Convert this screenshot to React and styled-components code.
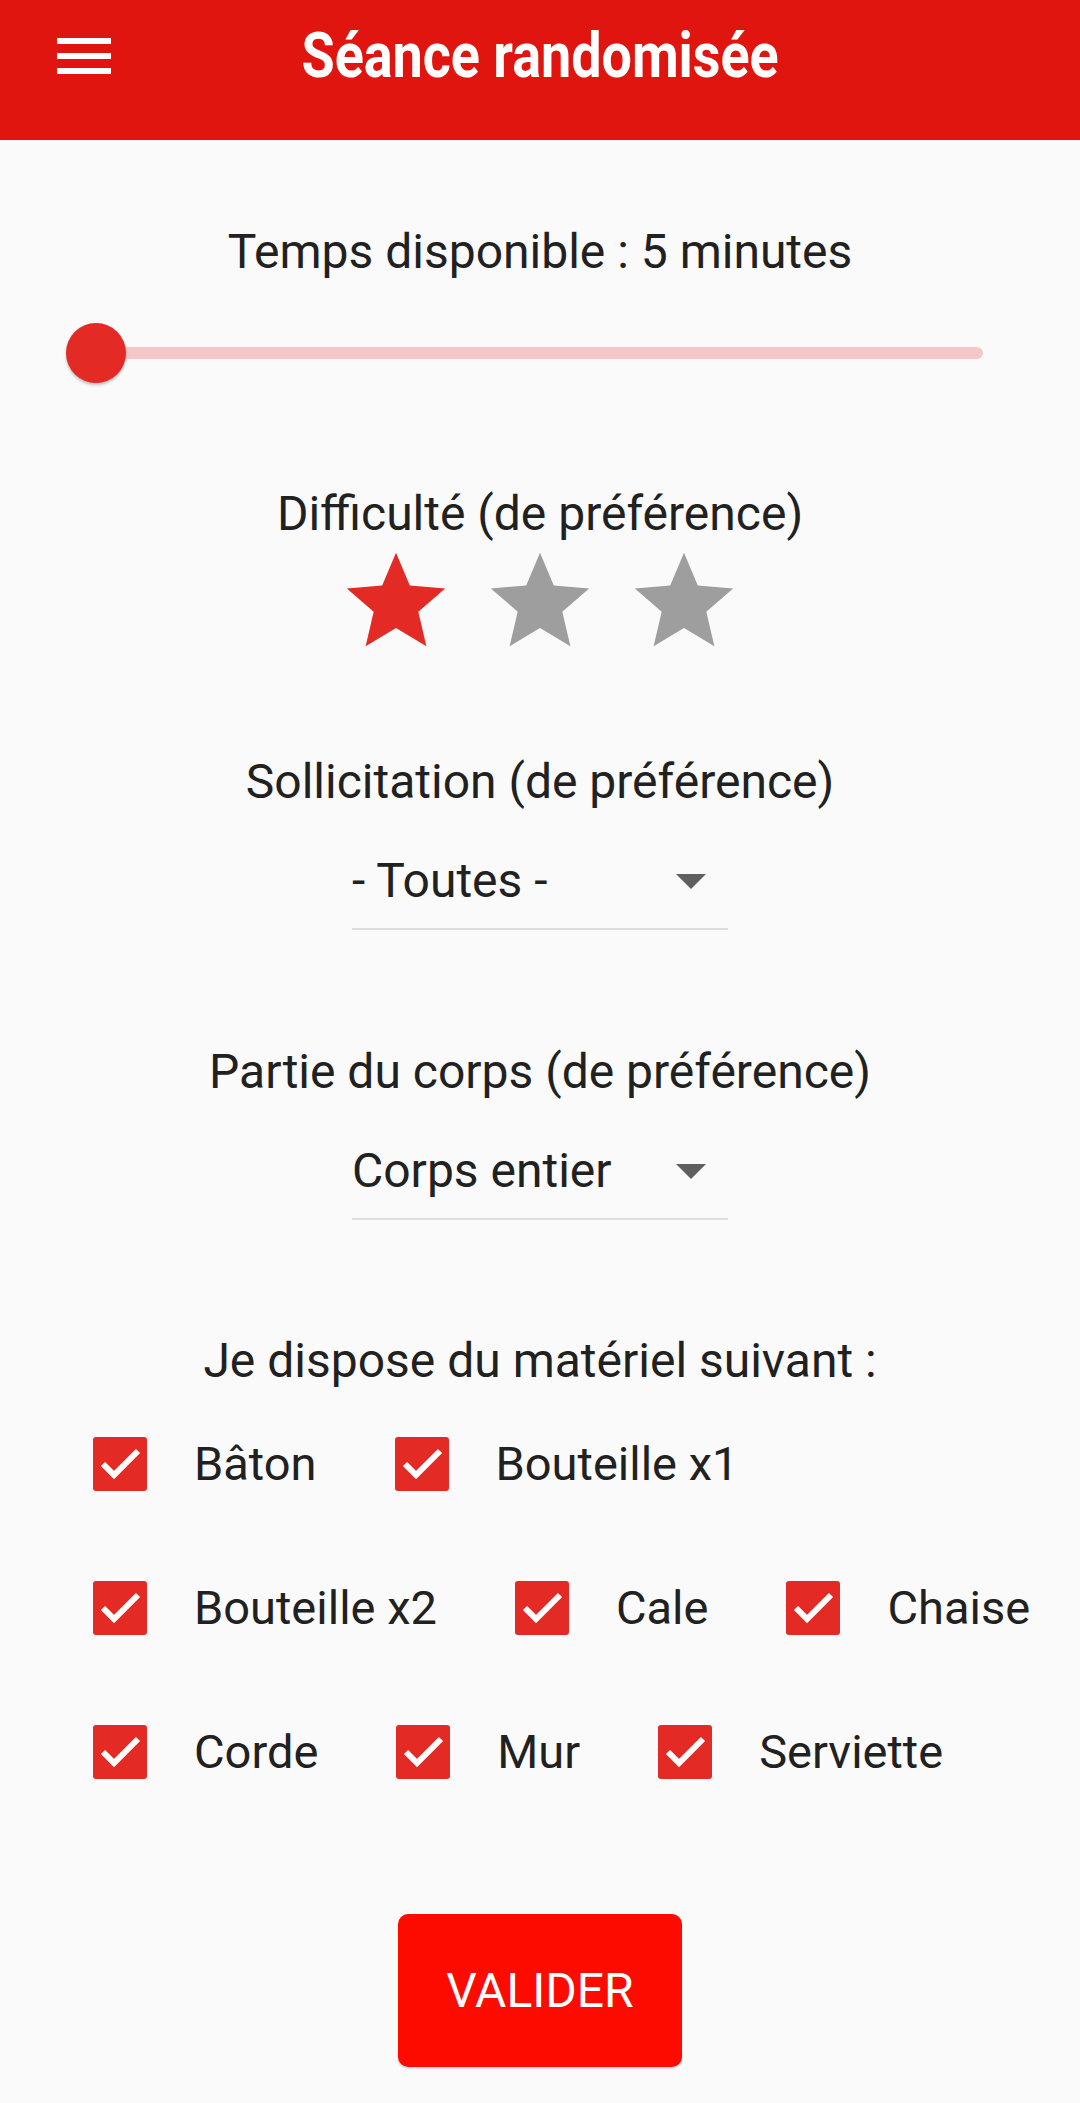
import React, { useState } from "react";
import styled, { createGlobalStyle } from "styled-components";

const GlobalStyle = createGlobalStyle`
  html, body {
    margin: 0;
    padding: 0;
    background-color: #fafafa;
  }
  body {
    font-family: Roboto, "Noto Sans", sans-serif;
    color: #212121;
  }
`;

const Page = styled.div`
  min-height: 100vh;
  background-color: #fafafa;
  display: flex;
  flex-direction: column;
`;

const Toolbar = styled.header`
  height: 140px;
  background-color: #e1150f;
  display: grid;
  grid-template-columns: 1fr auto 1fr;
  align-items: center;
  padding-bottom: 28px;
  box-sizing: border-box;
`;

const MenuButton = styled.button`
  justify-self: start;
  margin-left: 57px;
  padding: 0;
  border: none;
  background: none;
  display: flex;
`;

const Title = styled.h1`
  margin: 0;
  color: #ffffff;
  font-family: Roboto, sans-serif;
  font-weight: 700;
  font-size: 63px;
  line-height: 74px;
  white-space: nowrap;
  transform: scaleX(0.855);
`;

const Content = styled.main`
  display: flex;
  flex-direction: column;
  align-items: center;
  padding-top: 84px;
`;

const Label = styled.p`
  margin: ${(p) => p.$top || 0}px 0 0;
  font-size: 48px;
  line-height: 56px;
  text-align: center;
  color: #212121;
`;

const SliderTrack = styled.div`
  position: relative;
  align-self: stretch;
  margin: 43px 97px 0 96px;
  height: 60px;
  display: flex;
  align-items: center;

  &::before {
    content: "";
    flex: 1;
    height: 12px;
    border-radius: 6px;
    background-color: #f4c8c8;
  }
`;

const SliderThumb = styled.span`
  position: absolute;
  left: -30px;
  top: 0;
  width: 60px;
  height: 60px;
  border-radius: 50%;
  background-color: #e32a25;
  box-shadow: 0 2px 3px rgba(0, 0, 0, 0.25);
`;

const Stars = styled.div`
  display: flex;
  gap: 26px;
  margin-top: 1px;
`;

const StarButton = styled.svg`
  width: 118px;
  height: 118px;
  display: block;
  fill: ${(p) => (p.$active ? "#e42a25" : "#9e9e9e")};
`;

const Dropdown = styled.div`
  margin-top: 43px;
  width: 376px;
  box-sizing: border-box;
  padding: 0 22px 19px 0;
  border-bottom: 2px solid #dddddd;
  display: flex;
  align-items: center;
  justify-content: space-between;
`;

const DropdownValue = styled.span`
  font-size: 48px;
  line-height: 56px;
  color: #212121;
`;

const Arrow = styled.span`
  width: 0;
  height: 0;
  border-left: 15px solid transparent;
  border-right: 15px solid transparent;
  border-top: 15px solid #5f5f5f;
`;

const Equipment = styled.div`
  align-self: stretch;
  display: flex;
  flex-wrap: wrap;
  column-gap: 78px;
  padding: 0 20px 0 93px;
  margin-top: 3px;
`;

const Item = styled.label`
  height: 144px;
  display: flex;
  align-items: center;
  gap: 47px;
  font-size: 47px;
  line-height: 56px;
  color: #212121;
`;

const Box = styled.span`
  width: 54px;
  height: 54px;
  border-radius: 3px;
  background-color: ${(p) => (p.$checked ? "#e32a25" : "transparent")};
  border: ${(p) => (p.$checked ? "none" : "5px solid #757575")};
  box-sizing: border-box;
  display: flex;
`;

const SubmitButton = styled.button`
  margin: 90px 0 35px;
  width: 284px;
  height: 153px;
  border: none;
  border-radius: 10px;
  background-color: #fe0b00;
  color: #ffffff;
  font-family: Roboto, sans-serif;
  font-size: 48px;
  font-weight: 400;
  box-shadow: 0 2px 2px rgba(0, 0, 0, 0.12);
`;

const StarIcon = ({ active }) => (
  <StarButton viewBox="0 0 24 24" $active={active}>
    <path d="M12 17.27L18.18 21l-1.64-7.03L22 9.24l-7.19-.61L12 2 9.19 8.63 2 9.24l5.46 4.73L5.82 21z" />
  </StarButton>
);

const Checkbox = ({ label, checked, onToggle }) => (
  <Item onClick={onToggle}>
    <Box $checked={checked}>
      {checked && (
        <svg width="54" height="54" viewBox="0 0 54 54">
          <polyline
            points="10,27 21,38 45,14"
            fill="none"
            stroke="#ffffff"
            strokeWidth="6"
          />
        </svg>
      )}
    </Box>
    {label}
  </Item>
);

const MATERIEL = [
  "Bâton",
  "Bouteille x1",
  "Bouteille x2",
  "Cale",
  "Chaise",
  "Corde",
  "Mur",
  "Serviette",
];

export default function App() {
  const [difficulty, setDifficulty] = useState(1);
  const [checked, setChecked] = useState(MATERIEL.map(() => true));

  const toggle = (i) =>
    setChecked(checked.map((c, j) => (j === i ? !c : c)));

  return (
    <Page>
      <GlobalStyle />
      <Toolbar>
        <MenuButton aria-label="menu">
          <svg width="54" height="36" viewBox="0 0 54 36">
            <rect x="0" y="0" width="54" height="6" fill="#ffffff" />
            <rect x="0" y="15" width="54" height="6" fill="#ffffff" />
            <rect x="0" y="30" width="54" height="6" fill="#ffffff" />
          </svg>
        </MenuButton>
        <Title>Séance randomisée</Title>
      </Toolbar>

      <Content>
        <Label>Temps disponible : 5 minutes</Label>
        <SliderTrack>
          <SliderThumb />
        </SliderTrack>

        <Label $top={103}>Difficulté (de préférence)</Label>
        <Stars>
          {[1, 2, 3].map((n) => (
            <span key={n} onClick={() => setDifficulty(n)}>
              <StarIcon active={n <= difficulty} />
            </span>
          ))}
        </Stars>

        <Label $top={93}>Sollicitation (de préférence)</Label>
        <Dropdown>
          <DropdownValue>- Toutes -</DropdownValue>
          <Arrow />
        </Dropdown>

        <Label $top={114}>Partie du corps (de préférence)</Label>
        <Dropdown>
          <DropdownValue>Corps entier</DropdownValue>
          <Arrow />
        </Dropdown>

        <Label $top={113}>Je dispose du matériel suivant :</Label>
        <Equipment>
          {MATERIEL.map((m, i) => (
            <Checkbox
              key={m}
              label={m}
              checked={checked[i]}
              onToggle={() => toggle(i)}
            />
          ))}
        </Equipment>

        <SubmitButton>VALIDER</SubmitButton>
      </Content>
    </Page>
  );
}
